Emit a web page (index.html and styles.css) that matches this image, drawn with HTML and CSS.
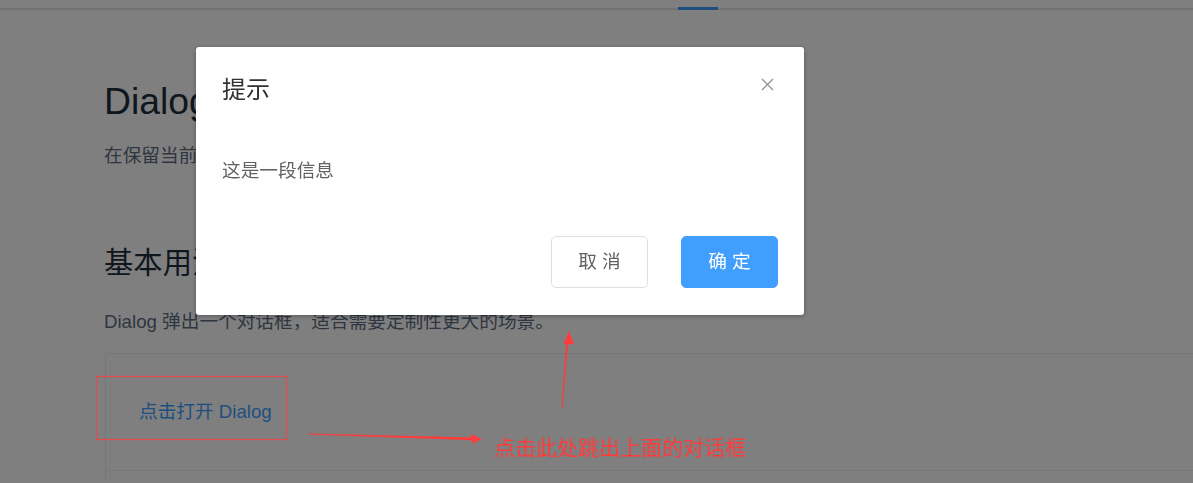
FILE: index.html
```html
<!DOCTYPE html>
<html lang="zh-CN">
<head>
<meta charset="utf-8">
<title>Dialog 对话框</title>
<link rel="stylesheet" href="styles.css">
</head>
<body>
<div class="page">
  <header class="topbar">
    <span class="nav-active"></span>
  </header>
  <main class="content">
    <h2 class="doc-title">Dialog 对话框</h2>
    <p class="doc-desc">在保留当前页面状态的情况下，告知用户并承载相关操作。</p>
    <h3 class="doc-sub">基本用法</h3>
    <p class="doc-desc doc-desc-2">Dialog 弹出一个对话框，适合需要定制性更大的场景。</p>
    <section class="demo-block">
      <div class="demo-source">
        <span class="text-link">点击打开 Dialog</span>
      </div>
      <div class="demo-meta"></div>
    </section>
  </main>
</div>

<div class="modal-mask"></div>
<div class="dialog">
  <div class="dialog-header">
    <span class="dialog-title">提示</span>
    <span class="dialog-close">
      <svg width="13" height="13" viewBox="0 0 13 13"><path d="M1 1 L12 12 M12 1 L1 12" stroke="#909399" stroke-width="1.3" fill="none"/></svg>
    </span>
  </div>
  <div class="dialog-body">这是一段信息</div>
  <div class="dialog-footer">
    <button class="btn btn-default">取 消</button>
    <button class="btn btn-primary">确 定</button>
  </div>
</div>

<div class="annotation">
  <svg class="annot-svg" width="1193" height="483" viewBox="0 0 1193 483">
    <rect x="96.5" y="376.5" width="190" height="63" fill="none" stroke="#e64a4a" stroke-width="1.2"/>
    <polygon points="308,433.6 474,437.6 474,440.2 308,434.6" fill="#ff3b3b"/>
    <polygon points="482,439 471,434.2 472,443.8" fill="#ff3b3b"/>
    <polygon points="561.5,408 566.2,342 568.2,342 562.6,408" fill="#ff3b3b"/>
    <polygon points="568.8,331 563.6,344 574,344.6" fill="#ff3b3b"/>
  </svg>
  <span class="annot-text">点击此处跳出上面的对话框</span>
</div>
</body>
</html>
```
FILE: styles.css
```css
html, body {
  margin: 0;
  padding: 0;
  background: #ffffff;
  overflow: hidden;
  width: 1193px;
  height: 483px;
}

body {
  font-family: "Liberation Sans", "Noto Sans CJK SC", sans-serif;
  position: relative;
}

.page {
  width: 1193px;
  height: 483px;
  overflow: hidden;
}

.topbar {
  height: 8px;
  border-bottom: 2px solid #e4e4e4;
  display: flex;
  align-items: flex-end;
  padding-left: 678px;
}

.nav-active {
  display: block;
  width: 40px;
  height: 3px;
  background: #409eff;
  margin-bottom: -2px;
}

.content {
  padding-left: 104px;
}

.doc-title {
  margin: 67px 0 0;
  font-size: 37.33px;
  line-height: 48px;
  font-weight: 400;
  color: #1f2f3d;
  white-space: nowrap;
}

.doc-desc {
  margin: 17px 0 0;
  font-size: 18.67px;
  line-height: 28px;
  color: #5e6d82;
  white-space: nowrap;
}

.doc-sub {
  margin: 73px 0 0;
  font-size: 29.33px;
  line-height: 40px;
  font-weight: 400;
  color: #1f2f3d;
}

.doc-desc-2 {
  margin-top: 25px;
}

.demo-block {
  margin-top: 17px;
  margin-left: 1px;
  width: 1140px;
  border: 1px solid #ebebeb;
  border-bottom: none;
  border-radius: 4px 4px 0 0;
}

.demo-source {
  padding: 44px 0 44px 33px;
}

.text-link {
  font-size: 18.67px;
  line-height: 28px;
  color: #409eff;
  display: block;
}

.demo-meta {
  border-top: 1px solid #eaeefb;
  height: 11px;
}

.modal-mask {
  position: fixed;
  inset: 0;
  background: rgba(0, 0, 0, 0.5);
}

.dialog {
  position: absolute;
  left: 196px;
  top: 47px;
  width: 608px;
  background: #ffffff;
  border-radius: 3px;
  box-shadow: 0 1px 4px rgba(0, 0, 0, 0.3);
  font-family: "Liberation Sans", "Noto Sans CJK SC", sans-serif;
}

.dialog-header {
  padding: 26.67px 26px 13.33px;
  position: relative;
}

.dialog-title {
  display: block;
  font-size: 24px;
  line-height: 32px;
  color: #303133;
}

.dialog-close {
  position: absolute;
  top: 31px;
  right: 30px;
  width: 13px;
  height: 13px;
  display: flex;
}

.dialog-body {
  padding: 40px 26px;
  font-size: 18.67px;
  line-height: 24px;
  color: #606266;
}

.dialog-footer {
  padding: 13.33px 26px 26.67px;
  display: flex;
  justify-content: flex-end;
  gap: 33px;
}

.btn {
  font-family: "Liberation Sans", "Noto Sans CJK SC", sans-serif;
  font-size: 18.67px;
  line-height: 1;
  padding: 16px 26px;
  border-radius: 5px;
  border: 1px solid #dcdfe6;
  background: #ffffff;
  color: #606266;
  width: 97px;
  height: 52px;
  box-sizing: border-box;
  display: flex;
  align-items: center;
  justify-content: center;
  white-space: pre;
}

.btn-primary {
  background: #409eff;
  border-color: #409eff;
  color: #ffffff;
}

.annotation {
  position: absolute;
  inset: 0;
  pointer-events: none;
}

.annot-svg {
  position: absolute;
  left: 0;
  top: 0;
}

.annot-text {
  position: absolute;
  left: 494px;
  top: 432px;
  font-family: "Noto Sans CJK SC", sans-serif;
  font-size: 21px;
  line-height: 28px;
  color: #ff3b3b;
  white-space: nowrap;
}
```
